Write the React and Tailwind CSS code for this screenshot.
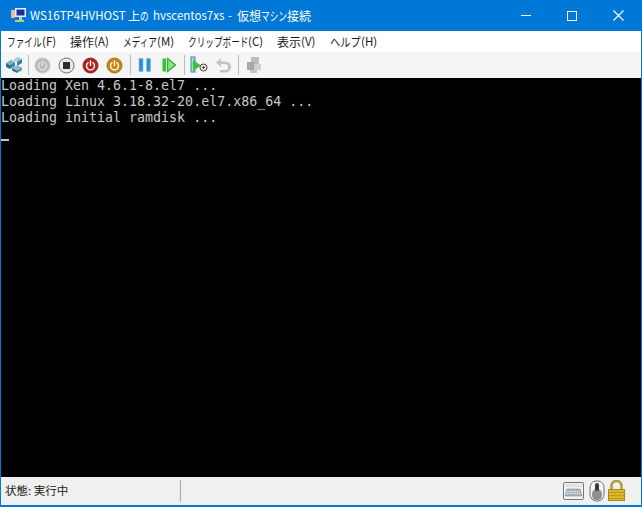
import React from "react";

// kana in the reference is a narrow UI face, so it gets squeezed horizontally
function Kana({ box, scale = "scale-x-[0.72]", children }) {
  return (
    <span className={`${box} inline-block shrink-0 whitespace-nowrap`}>
      <span className={`${scale} inline-block origin-left`}>{children}</span>
    </span>
  );
}

const menus = [
  { w: "w-[63px]", head: <Kana box="w-[35px]">ファイル</Kana>, key: "(F)" },
  { w: "w-[53px]", head: <span>操作</span>, key: "(A)" },
  { w: "w-[65px]", head: <Kana box="w-[34px]">メディア</Kana>, key: "(M)" },
  { w: "w-[89px]", head: <Kana box="w-[60px]">クリップボード</Kana>, key: "(C)" },
  { w: "w-[53px]", head: <span>表示</span>, key: "(V)" },
  { w: "w-[60px]", head: <Kana box="w-[31px]" scale="scale-x-[0.85]">ヘルプ</Kana>, key: "(H)" },
];

function Sep() {
  return <div className="w-px h-[20px] bg-[#b9b9b9] shrink-0" />;
}

function RoundButton({ fill, ring, children }) {
  return (
    <svg width="17" height="17" viewBox="0 0 17 17" className="shrink-0">
      <circle cx="8.5" cy="8.5" r="7.5" fill={fill} stroke={ring} strokeWidth="1" />
      {children}
    </svg>
  );
}

function PowerGlyph({ color }) {
  return (
    <g fill="none" stroke={color} strokeWidth="1.4" strokeLinecap="round">
      <path d="M6 5.8a4 4 0 1 0 5 0" />
      <path d="M8.5 4v4.5" />
    </g>
  );
}

function HostIcon() {
  return (
    <svg width="18" height="18" viewBox="0 0 18 18" className="shrink-0">
      <path d="M1 7l5-3 4 2-5 3z" fill="#7fb0c4" />
      <path d="M1 7l4 2v4L1 11z" fill="#2f6f8c" />
      <path d="M5 9l5-3v4l-5 3z" fill="#3f86a6" />
      <path d="M8 4l5-3 4 2-5 3z" fill="#a5c9d8" />
      <path d="M12 6l5-3v4l-5 3z" fill="#3f7f9c" />
      <path d="M7 12l5-3 5 2.500-5 3z" fill="#8fbccd" />
      <path d="M7 12l5 2.500V17l-5-2.500z" fill="#2f6f8c" />
      <path d="M12 14.500l5-3V14l-5 3z" fill="#4b93b0" />
    </svg>
  );
}

function Toolbar() {
  return (
    <div className="h-[26px] bg-[#f5f5f5] flex items-center pl-[4px] shrink-0">
      <HostIcon />
      <div className="w-[5px]" />
      <Sep />
      <div className="w-[5px]" />
      <div className="flex items-center gap-[7px]">
        <RoundButton fill="#b9b9b9" ring="#c9c9c9">
          <PowerGlyph color="#e4e4e4" />
        </RoundButton>
        <RoundButton fill="#e9e9e9" ring="#6d6d6d">
          <rect x="5" y="5" width="7" height="7" fill="#2c2c2c" />
        </RoundButton>
        <RoundButton fill="#b5201f" ring="#8e2a2a">
          <PowerGlyph color="#ffffff" />
        </RoundButton>
        <RoundButton fill="#c98412" ring="#a8741c">
          <PowerGlyph color="#ffffff" />
        </RoundButton>
      </div>
      <div className="w-[7px]" />
      <Sep />
      <div className="w-[7px]" />
      <svg width="14" height="16" viewBox="0 0 14 16" className="shrink-0">
        <rect x="1" y="1.500" width="4" height="13" fill="#2b8fd0" stroke="#7fbde3" strokeWidth="0.6" />
        <rect x="8.500" y="1.500" width="4" height="13" fill="#2b8fd0" stroke="#7fbde3" strokeWidth="0.6" />
      </svg>
      <div className="w-[10px]" />
      <svg width="14" height="16" viewBox="0 0 14 16" className="shrink-0">
        <rect x="0.500" y="1.500" width="3.500" height="13" fill="#36c13c" />
        <path d="M5.500 1.500L13.500 8l-8 6.500z" fill="#8fe08c" stroke="#2fb536" strokeWidth="1.400" />
      </svg>
      <div className="w-[8px]" />
      <Sep />
      <div className="w-[5px]" />
      <svg width="19" height="18" viewBox="0 0 19 18" className="shrink-0">
        <rect x="1" y="1" width="4" height="15" fill="#a9d4ea" stroke="#3a87b0" />
        <path d="M3 4l8 5.500L3 15z" fill="#3cc43f" />
        <circle cx="13.500" cy="11.500" r="3.500" fill="#eeeeee" stroke="#444444" />
        <path d="M12 11.500h3M13.500 10v3" stroke="#b5332a" strokeWidth="1.200" />
      </svg>
      <div className="w-[5px]" />
      <svg width="18" height="18" viewBox="0 0 18 18" className="shrink-0">
        <path
          d="M7 2L2 6.500 7 11V8h4a2.500 2.500 0 0 1 0 6H6v2.500h5.500a5 5 0 0 0 0-11H7z"
          fill="#c4c4c4"
        />
      </svg>
      <div className="w-[6px]" />
      <Sep />
      <div className="w-[6px]" />
      <svg width="18" height="18" viewBox="0 0 18 18" className="shrink-0">
        <rect x="6" y="1" width="8" height="8" fill="#bdbdbd" />
        <rect x="2" y="6" width="8" height="8" fill="#a9a9a9" />
        <rect x="9" y="8" width="7" height="6" fill="#cfcfcf" />
        <rect x="5" y="14" width="7" height="3" fill="#c4c4c4" />
      </svg>
    </div>
  );
}

function StatusIcons() {
  return (
    <div className="flex items-center pr-[15px]">
      <svg width="22" height="20" viewBox="0 0 22 20">
        <rect x="0.500" y="1.500" width="20" height="17" rx="1.500" fill="#f2f2f2" stroke="#777777" />
        <rect x="2" y="3" width="17" height="3" fill="#e2e2e2" />
        <path d="M2 15l2-7h13l2 7z" fill="#a9b4bd" stroke="#8a8a8a" strokeWidth="0.600" />
        <path d="M4 10.500h13M3.500 12.500h14" stroke="#e8e8e8" strokeDasharray="1.500 1" />
      </svg>
      <svg width="18" height="22" viewBox="0 0 18 22" className="ml-[3px]">
        <path d="M9 1c5 0 7 3 7 8v5c0 4-3 7-7 7s-7-3-7-7V9c0-5 2-8 7-8z" fill="#f4f4f4" stroke="#6c6c6c" />
        <path d="M9 9c4 0 5 3 5 6 0 3-2 5-5 5s-5-2-5-5c0-3 1-6 5-6z" fill="#8f8f8f" />
        <rect x="7" y="3" width="4" height="8" rx="2" fill="#3a3a3a" />
      </svg>
      <svg width="19" height="22" viewBox="0 0 19 22" className="ml-px">
        <path d="M4.500 10V6a5 5 0 0 1 10 0V10" fill="none" stroke="#b39a3a" strokeWidth="2.500" />
        <rect x="1.500" y="9.500" width="16" height="11" fill="#dcb62b" stroke="#a98b1f" />
        <path d="M2 12.500h15M2 15.500h15M2 18.500h15" stroke="#bd9a20" />
      </svg>
    </div>
  );
}

export default function App() {
  return (
    <div className="w-[642px] h-[507px] bg-[#0078d7] p-px pt-0 flex flex-col overflow-hidden font-['Noto_Sans_CJK_JP',sans-serif]">
      {/* Title bar */}
      <div className="h-[31px] flex items-center shrink-0 text-white">
        <svg width="17" height="17" viewBox="0 0 17 17" className="ml-[9px] shrink-0">
          <rect x="1" y="3" width="4" height="8" fill="#e9b9a0" />
          <rect x="5" y="1" width="11" height="9" fill="#e8f0f8" />
          <rect x="6.500" y="2.500" width="8" height="6" fill="#17309c" />
          <rect x="9" y="10" width="3" height="3" fill="#c9c9c9" />
          <rect x="5" y="13" width="9" height="2" fill="#b5d36a" />
        </svg>
        <div className="ml-[3px] flex items-center text-[12px] leading-none whitespace-nowrap">
          <span className="w-[98px] text-[11.5px]">WS16TP4HVHOST</span>
          <span>上</span>
          <Kana box="w-[13px]">の</Kana>
          <span className="w-[75px] text-[11.5px]">hvscentos7xs</span>
          <span className="w-[9px] text-[11.5px]">-</span>
          <span>仮想</span>
          <Kana box="w-[26px]">マシン</Kana>
          <span>接続</span>
        </div>
        <div className="ml-auto flex items-center h-full">
          <div className="w-[46px] flex justify-center">
            <div className="w-[10px] h-px bg-white" />
          </div>
          <div className="w-[46px] flex justify-center">
            <div className="w-[10px] h-[10px] border border-white" />
          </div>
          <div className="w-[46px] flex justify-center">
            <svg width="11" height="11" viewBox="0 0 11 11">
              <path d="M0.500 0.500l10 10M10.500 0.500l-10 10" stroke="#ffffff" strokeWidth="1.100" />
            </svg>
          </div>
        </div>
      </div>

      {/* Menu bar */}
      <div className="h-[21px] bg-white flex items-center pl-[6px] shrink-0 text-[12px] text-[#1a1a1a]">
        {menus.map((m) => (
          <div key={m.key} className={`${m.w} flex items-center whitespace-nowrap leading-none`}>
            {m.head}
            <span className="text-[11.5px]">{m.key}</span>
          </div>
        ))}
      </div>

      <Toolbar />

      {/* Console */}
      <div className="flex-1 bg-black text-[#c8c8c8] text-[13.3px] leading-[16px] whitespace-pre font-['DejaVu_Sans_Mono',monospace]">
        <div>Loading Xen 4.6.1-8.el7 ...</div>
        <div>Loading Linux 3.18.32-20.el7.x86_64 ...</div>
        <div>Loading initial ramdisk ...</div>
        <div>&nbsp;</div>
        <div className="w-[8px] h-[2px] bg-[#c8c8c8] mt-[-3px]" />
      </div>

      {/* Status bar */}
      <div className="h-[28px] bg-[#f0f0f0] flex items-center shrink-0 mb-px">
        <div className="w-[180px] h-[22px] border-r border-[#a8a8a8] pl-[4px] flex items-center text-[11.5px] text-[#1a1a1a] leading-none">
          状態: 実行中
        </div>
        <div className="ml-auto">
          <StatusIcons />
        </div>
      </div>
    </div>
  );
}
